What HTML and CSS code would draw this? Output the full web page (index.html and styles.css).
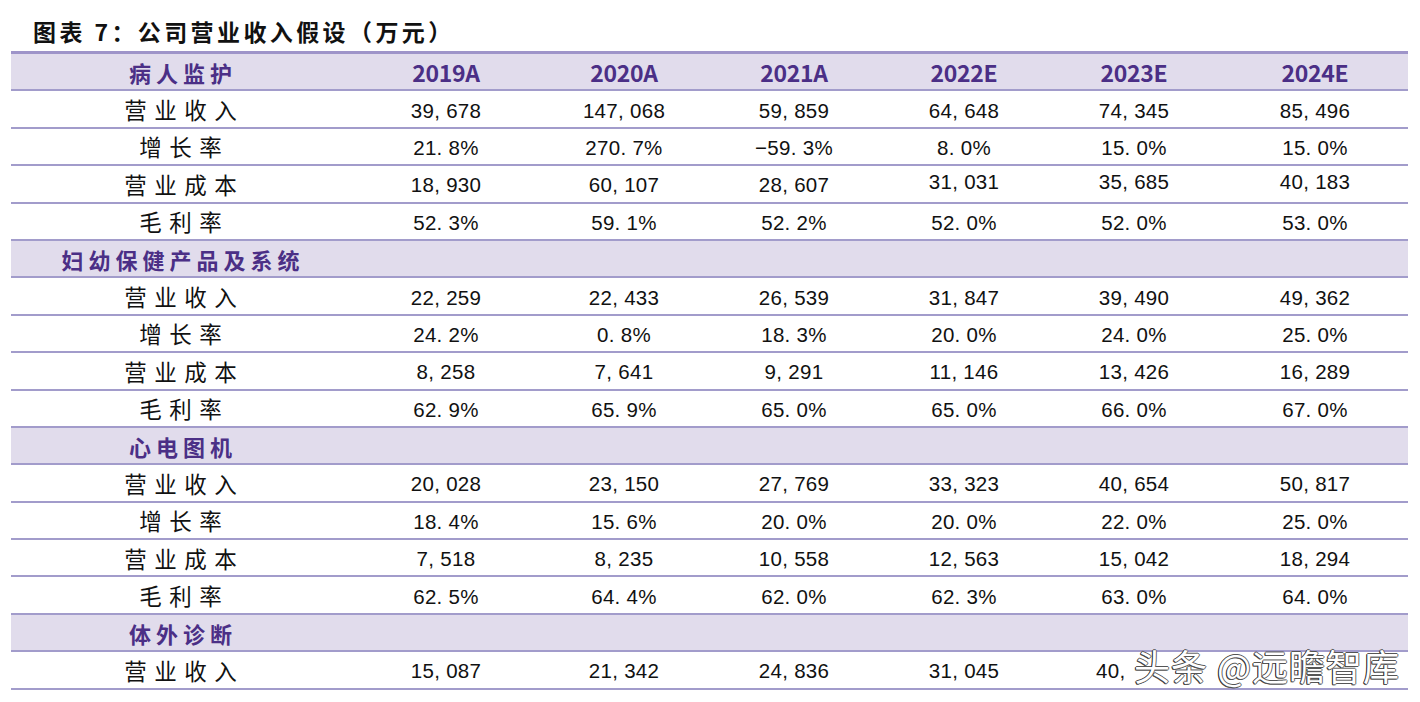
FILE: index.html
```html
<!DOCTYPE html>
<html lang="zh-CN">
<head>
<meta charset="utf-8">
<title>图表 7：公司营业收入假设（万元）</title>
<link rel="stylesheet" href="styles.css">
</head>
<body>
<div class="page">
  <h1 class="title">图表 7：公司营业收入假设（万元）</h1>
  <table class="fin">
    <colgroup>
      <col class="c0"><col class="c1"><col class="c2"><col class="c3"><col class="c4"><col class="c5"><col class="c6">
    </colgroup>
    <tr class="head">
      <td class="sec">病人监护</td><td>2019A</td><td>2020A</td><td>2021A</td><td>2022E</td><td>2023E</td><td>2024E</td>
    </tr>
    <tr><td class="lab">营业收入</td><td>39, 678</td><td>147, 068</td><td>59, 859</td><td>64, 648</td><td>74, 345</td><td>85, 496</td></tr>
    <tr><td class="lab">增长率</td><td>21. 8%</td><td>270. 7%</td><td>−59. 3%</td><td>8. 0%</td><td>15. 0%</td><td>15. 0%</td></tr>
    <tr><td class="lab">营业成本</td><td>18, 930</td><td>60, 107</td><td>28, 607</td><td class="up">31, 031</td><td class="up">35, 685</td><td class="up">40, 183</td></tr>
    <tr><td class="lab">毛利率</td><td>52. 3%</td><td>59. 1%</td><td>52. 2%</td><td>52. 0%</td><td>52. 0%</td><td>53. 0%</td></tr>

    <tr class="head"><td class="sec">妇幼保健产品及系统</td><td></td><td></td><td></td><td></td><td></td><td></td></tr>
    <tr><td class="lab">营业收入</td><td>22, 259</td><td>22, 433</td><td>26, 539</td><td>31, 847</td><td>39, 490</td><td>49, 362</td></tr>
    <tr><td class="lab">增长率</td><td>24. 2%</td><td>0. 8%</td><td>18. 3%</td><td>20. 0%</td><td>24. 0%</td><td>25. 0%</td></tr>
    <tr><td class="lab">营业成本</td><td>8, 258</td><td>7, 641</td><td>9, 291</td><td>11, 146</td><td>13, 426</td><td>16, 289</td></tr>
    <tr><td class="lab">毛利率</td><td>62. 9%</td><td>65. 9%</td><td>65. 0%</td><td>65. 0%</td><td>66. 0%</td><td>67. 0%</td></tr>

    <tr class="head"><td class="sec">心电图机</td><td></td><td></td><td></td><td></td><td></td><td></td></tr>
    <tr><td class="lab">营业收入</td><td>20, 028</td><td>23, 150</td><td>27, 769</td><td>33, 323</td><td>40, 654</td><td>50, 817</td></tr>
    <tr><td class="lab">增长率</td><td>18. 4%</td><td>15. 6%</td><td>20. 0%</td><td>20. 0%</td><td>22. 0%</td><td>25. 0%</td></tr>
    <tr><td class="lab">营业成本</td><td>7, 518</td><td>8, 235</td><td>10, 558</td><td>12, 563</td><td>15, 042</td><td>18, 294</td></tr>
    <tr><td class="lab">毛利率</td><td>62. 5%</td><td>64. 4%</td><td>62. 0%</td><td>62. 3%</td><td>63. 0%</td><td>64. 0%</td></tr>

    <tr class="head"><td class="sec">体外诊断</td><td></td><td></td><td></td><td></td><td></td><td></td></tr>
    <tr><td class="lab">营业收入</td><td>15, 087</td><td>21, 342</td><td>24, 836</td><td>31, 045</td><td class="hidden-under">40,</td><td></td></tr>
  </table>
  <div class="watermark">头条 @远瞻智库</div>
</div>
</body>
</html>
```

FILE: styles.css
```css
html, body {
  margin: 0;
  padding: 0;
  background: #ffffff;
}

.page {
  position: relative;
  width: 1420px;
  height: 702px;
  padding: 16px 0 0 11px;
  box-sizing: border-box;
  font-family: "Liberation Sans", "Noto Sans CJK SC", sans-serif;
  color: #111111;
  overflow: hidden;
}

.title {
  margin: 0 0 5px 22px;
  height: 30px;
  line-height: 30px;
  font-family: "Noto Sans CJK SC", sans-serif;
  font-size: 23px;
  font-weight: 700;
  letter-spacing: 3.4px;
  color: #111111;
}

.fin {
  width: 1397px;
  border-collapse: separate;
  border-spacing: 0;
  table-layout: fixed;
  border-top: 3px solid #9e94c9;
}

.c0 { width: 339px; }
.c1 { width: 192px; }
.c2 { width: 164px; }
.c3 { width: 176px; }
.c4 { width: 164px; }
.c5 { width: 176px; }
.c6 { width: 186px; }

.fin td {
  height: 37.4px;
  box-sizing: border-box;
  padding: 3px 0 0 0;
  border-bottom: 2px solid #a29ccb;
  text-align: center;
  vertical-align: middle;
  font-size: 20.5px;
  letter-spacing: 0.3px;
  white-space: nowrap;
}

.fin tr.head td {
  background: #e1dcec;
  color: #4b2f86;
  font-family: "Noto Sans CJK SC", sans-serif;
  font-weight: 700;
  font-size: 23px;
  letter-spacing: -0.3px;
  padding-top: 0;
}

.fin tr.head td.sec {
  font-size: 22px;
  letter-spacing: 5px;
  padding-left: 5px;
}

.fin td.lab {
  font-family: "Noto Sans CJK SC", sans-serif;
  font-size: 22.5px;
  letter-spacing: 7.5px;
  padding-left: 7.5px;
  padding-top: 0;
  color: #111111;
}

.fin td.up {
  padding-top: 0;
  padding-bottom: 4px;
}

.fin td.hidden-under {
  text-align: left;
  padding-left: 0;
  text-indent: 50px;
}

.watermark {
  position: absolute;
  left: 1134px;
  top: 642px;
  font-family: "Noto Sans CJK SC", sans-serif;
  font-size: 36px;
  line-height: 46px;
  letter-spacing: 1px;
  color: #ffffff;
  text-shadow: -1px 0 0 #333333, 1px 0 0 #666666, 0 1px 0 #555555, 0 -1px 0 #555555, -1px 1px 0 #444444;
}
```
